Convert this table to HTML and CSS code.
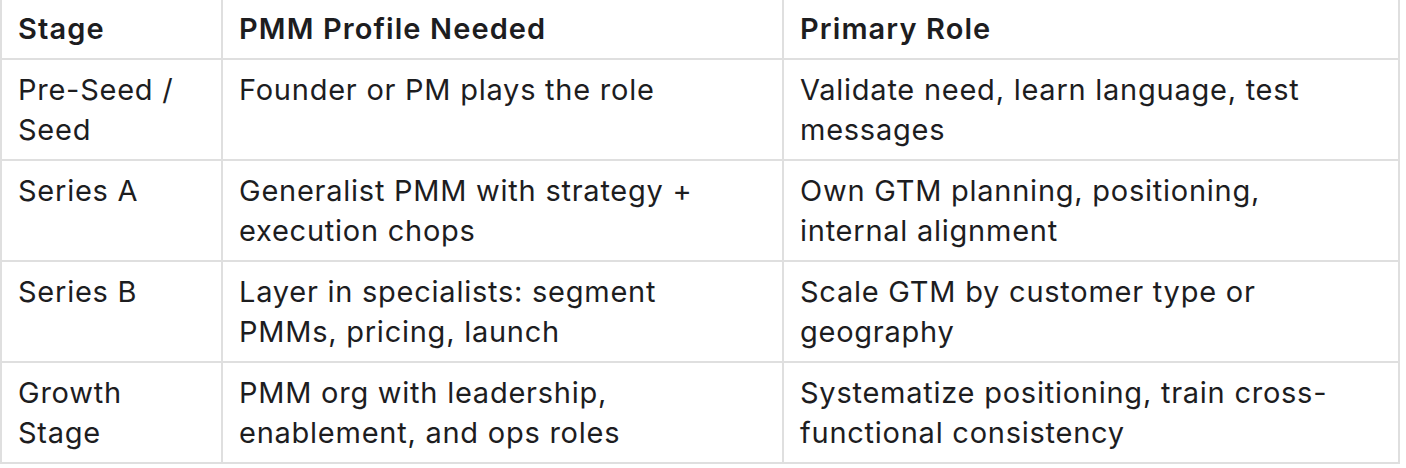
FILE: index.html
```html
<!DOCTYPE html>
<html>
<head>
<meta charset="utf-8">
<link rel="stylesheet" href="styles.css">
</head>
<body>
<table class="grid">
  <colgroup>
    <col class="c1">
    <col class="c2">
    <col class="c3">
  </colgroup>
  <thead>
    <tr><th>Stage</th><th>PMM Profile Needed</th><th>Primary Role</th></tr>
  </thead>
  <tbody>
    <tr><td class="stage">Pre-Seed / Seed</td><td>Founder or PM plays the role</td><td>Validate need, learn language, test messages</td></tr>
    <tr><td class="stage">Series A</td><td>Generalist PMM with strategy + execution chops</td><td>Own GTM planning, positioning, internal alignment</td></tr>
    <tr><td class="stage">Series B</td><td>Layer in specialists: segment PMMs, pricing, launch</td><td>Scale GTM by customer type or geography</td></tr>
    <tr><td class="stage">Growth Stage</td><td>PMM org with leadership, enablement, and ops roles</td><td>Systematize positioning, train cross-functional consistency</td></tr>
  </tbody>
</table>
</body>
</html>
```

FILE: styles.css
```css
html, body {
  margin: 0;
  padding: 0;
  background: #ffffff;
}
.grid {
  border-collapse: collapse;
  table-layout: fixed;
  width: 1398px;
  margin-top: -2px;
  font-family: Inter, "Noto Sans", sans-serif;
  font-size: 29px;
  letter-spacing: 0.75px;
  line-height: 40px;
  color: #1d1d1f;
}
.c1 { width: 221px; }
.c2 { width: 561px; }
.c3 { width: 616px; }
.grid th, .grid td {
  border: 2px solid #dfdfdf;
  padding: 9px 16px;
  text-align: left;
  vertical-align: top;
}
.grid td {
  padding-top: 10px;
  padding-bottom: 9px;
  padding-right: 52px;
}
.grid td.stage { padding-right: 16px; }
.grid th {
  font-weight: 600;
  letter-spacing: 1.1px;
}
```
